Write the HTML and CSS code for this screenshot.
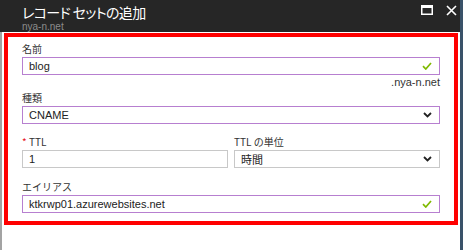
FILE: index.html
```html
<!DOCTYPE html>
<html lang="ja">
<head>
<meta charset="utf-8">
<link rel="stylesheet" href="styles.css">
</head>
<body>
<div class="blade">
  <div class="header">
    <div class="titles">
      <div class="title">レコード セットの追加</div>
      <div class="subtitle">nya-n.net</div>
    </div>
    <div class="controls">
      <svg class="ico" width="12" height="10" viewBox="0 0 12 10"><rect x="0.75" y="0.75" width="10.5" height="8.5" fill="none" stroke="#fff" stroke-width="1.5"/><rect x="0" y="0" width="12" height="3" fill="#fff"/></svg>
      <svg class="ico" width="11" height="11" viewBox="0 0 11 11"><path d="M1 1 L10 10 M10 1 L1 10" stroke="#fff" stroke-width="1.6"/></svg>
    </div>
  </div>
  <div class="panel">
    <div class="frame">
      <div class="field">
        <div class="label">名前</div>
        <div class="input purple"><span>blog</span><svg class="check" width="10" height="8" viewBox="0 0 10 8"><path d="M1 4.2 L3.8 7 L9 1" fill="none" stroke="#7fba00" stroke-width="1.7"/></svg></div>
        <div class="suffix">.nya-n.net</div>
      </div>
      <div class="field">
        <div class="label">種類</div>
        <div class="input purple"><span>CNAME</span><svg class="chev" width="9" height="6" viewBox="0 0 9 6"><path d="M1 1 L4.5 4.5 L8 1" fill="none" stroke="#222" stroke-width="1.8"/></svg></div>
      </div>
      <div class="row">
        <div class="field col">
          <div class="label"><span class="req">*</span> TTL</div>
          <div class="input gray"><span>1</span></div>
        </div>
        <div class="field col">
          <div class="label">TTL の単位</div>
          <div class="input gray"><span>時間</span><svg class="chev" width="9" height="6" viewBox="0 0 9 6"><path d="M1 1 L4.5 4.5 L8 1" fill="none" stroke="#222" stroke-width="1.8"/></svg></div>
        </div>
      </div>
      <div class="field">
        <div class="label">エイリアス</div>
        <div class="input purple"><span>ktkrwp01.azurewebsites.net</span><svg class="check" width="10" height="8" viewBox="0 0 10 8"><path d="M1 4.2 L3.8 7 L9 1" fill="none" stroke="#7fba00" stroke-width="1.7"/></svg></div>
      </div>
    </div>
  </div>
</div>
</body>
</html>
```
FILE: styles.css
```css
html, body {
  margin: 0;
  padding: 0;
  background: #fff;
}
body {
  width: 466px;
  height: 250px;
  overflow: hidden;
  font-family: "Liberation Sans", "Noto Sans CJK JP", sans-serif;
}
.blade {
  width: 460px;
  height: 250px;
  border-right: 3px solid #3a5269;
  display: flex;
  flex-direction: column;
}
.header {
  height: 32px;
  background: #262626;
  display: flex;
  justify-content: space-between;
  padding: 0 3px 0 22px;
}
.title {
  font-family: "Noto Sans CJK JP", sans-serif;
  font-feature-settings: "palt";
  color: #fff;
  font-size: 14px;
  letter-spacing: -0.6px;
  line-height: 18px;
  margin-top: 3px;
}
.subtitle {
  color: #8c8c8c;
  font-size: 10px;
  line-height: 11px;
  margin-top: 0px;
}
.controls {
  display: flex;
  gap: 13px;
  padding-top: 5px;
}
.panel {
  flex: 1;
  border-left: 2px solid #a3a3a3;
  padding: 1px 2px 0 2px;
}
.frame {
  border: 4px solid #ff0000;
  padding: 3px 14px 8px 14px;
  box-sizing: border-box;
  width: 454px;
}
.field {
  display: flex;
  flex-direction: column;
}
.label {
  font-family: "Noto Sans CJK JP", sans-serif;
  font-size: 10px;
  line-height: 17px;
  color: #333;
}
.req {
  color: #e81123;
}
.input {
  height: 18px;
  box-sizing: border-box;
  display: flex;
  align-items: center;
  justify-content: space-between;
  padding: 0 7px 0 6px;
  font-size: 11px;
  color: #222;
}
.input span {
  font-family: "Liberation Sans", "Noto Sans CJK JP", sans-serif;
}
.purple {
  border: 1px solid #b77fd0;
}
.gray {
  border: 1px solid #c8c8c8;
}
.suffix {
  text-align: right;
  font-size: 11px;
  line-height: 15px;
  color: #333;
  margin-bottom: -1px;
}
.row {
  display: flex;
  gap: 6px;
  margin-top: 9px;
  margin-bottom: 10px;
}
.col {
  flex: 1;
}
```
